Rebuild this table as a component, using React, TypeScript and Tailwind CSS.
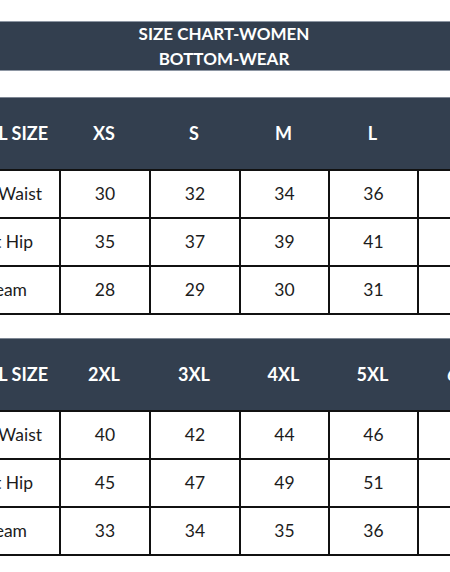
const SIZES_A = ['XS', 'S', 'M', 'L', 'XL']
const SIZES_B = ['2XL', '3XL', '4XL', '5XL', '6XL']

const ROWS_A = [
  { label: 'Waist', pr: 'pr-[17px]', values: ['30', '32', '34', '36', '38'] },
  { label: 't Hip', pr: 'pr-[26px]', values: ['35', '37', '39', '41', '43'] },
  { label: 'eam', pr: 'pr-[32px]', values: ['28', '29', '30', '31', '32'] },
]

const ROWS_B = [
  { label: 'Waist', pr: 'pr-[17px]', values: ['40', '42', '44', '46', '48'] },
  { label: 't Hip', pr: 'pr-[26px]', values: ['45', '47', '49', '51', '53'] },
  { label: 'eam', pr: 'pr-[32px]', values: ['33', '34', '35', '36', '37'] },
]

// column widths after the (cropped) label column
const COLS = ['w-[90px]', 'w-[90px]', 'w-[89px]', 'w-[89px]', 'w-[92px]']

function SizeTable({
  sizes,
  rows,
}: {
  sizes: string[]
  rows: { label: string; pr: string; values: string[] }[]
}) {
  return (
    <div className="flex flex-col">
      {/* header */}
      <div className="flex h-[72px] items-center border-t border-[#7d8693] bg-[#333f4f] text-[18px] font-bold text-white">
        <div className="flex w-[59px] shrink-0 justify-end overflow-hidden whitespace-nowrap pr-[11px]">L SIZE</div>
        {sizes.map((s, i) => (
          <div key={s} className={`${COLS[i]} shrink-0 text-center whitespace-nowrap`}>
            {s}
          </div>
        ))}
      </div>

      {/* body */}
      <div className="border-b-2 border-[#111]">
        {rows.map((r) => (
          <div key={r.label} className="flex h-[48px] border-t-2 border-[#111] text-[17.5px] text-[#1c1c1c]">
            <div className={`flex w-[59px] shrink-0 items-center justify-end overflow-hidden whitespace-nowrap ${r.pr}`}>
              {r.label}
            </div>
            {r.values.map((v, i) => (
              <div
                key={i}
                className={`${COLS[i]} flex shrink-0 items-center justify-center border-l-2 border-[#111]`}
              >
                {v}
              </div>
            ))}
          </div>
        ))}
      </div>
    </div>
  )
}

export default function App() {
  return (
    <div
      className="h-[572px] w-full overflow-hidden bg-white"
      style={{ fontFamily: 'Lato, "Open Sans", sans-serif' }}
    >
      <div className="w-[520px] pt-[21px]">
        {/* title bar */}
        <div className="flex h-[50px] flex-col justify-center border-y border-[#8d96a3] bg-[#333f4f] text-[17px] font-bold leading-[25px] text-white">
          <div className="w-[448px] text-center">SIZE CHART-WOMEN</div>
          <div className="w-[448px] text-center">BOTTOM-WEAR</div>
        </div>

        <div className="mt-[26px]">
          <SizeTable sizes={SIZES_A} rows={ROWS_A} />
        </div>

        <div className="mt-[23px]">
          <SizeTable sizes={SIZES_B} rows={ROWS_B} />
        </div>
      </div>
    </div>
  )
}
